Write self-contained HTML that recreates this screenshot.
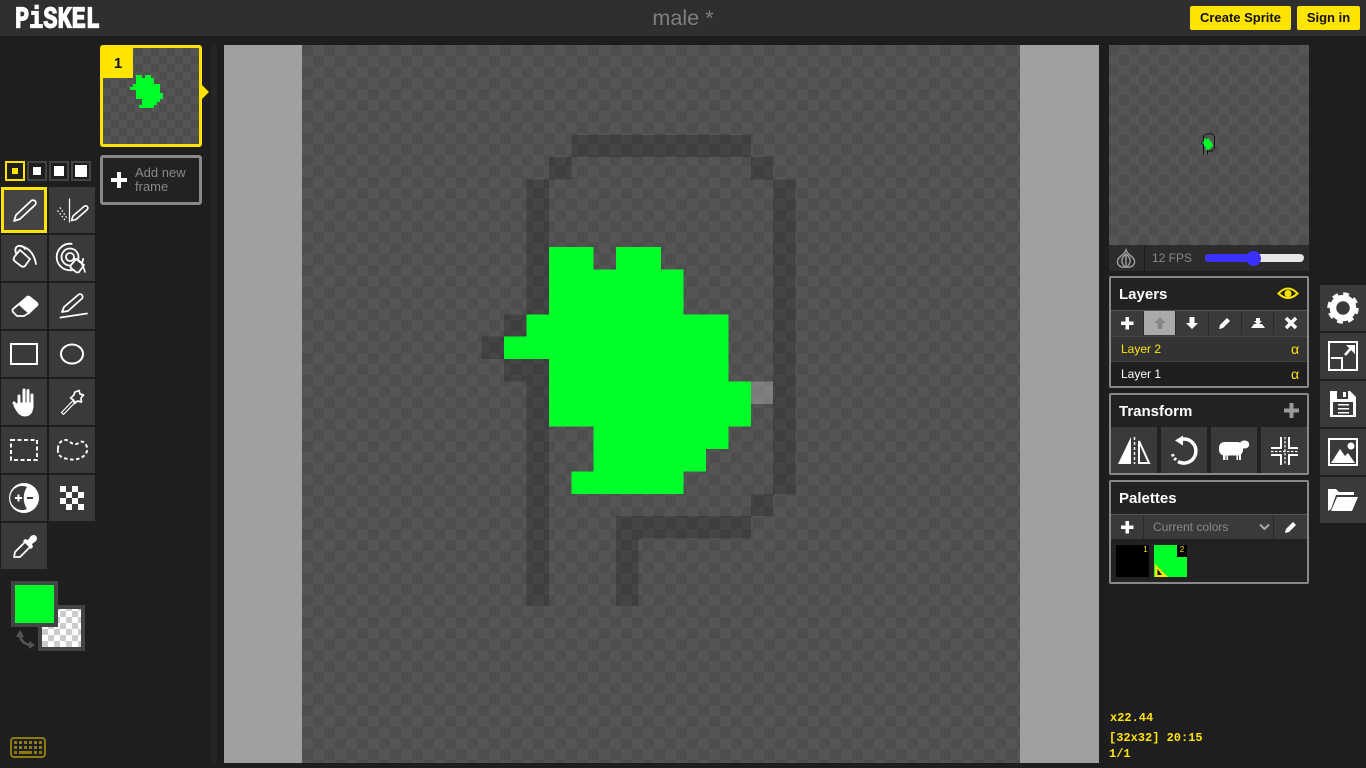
<!DOCTYPE html>
<html><head><meta charset="utf-8"><title>Piskel</title>
<style>
*{box-sizing:border-box;margin:0;padding:0}
html,body{width:1366px;height:768px;overflow:hidden;background:#1e1e1e;font-family:"Liberation Sans",sans-serif}
.a{position:absolute}
.btn{position:absolute;background:#3a3a3a;width:46px;height:46px}
.panel{position:absolute;left:1109px;width:200px;border:2px solid #888;border-radius:2px;background:#222}
.ttl{position:absolute;left:1119px;font:bold 15px "Liberation Sans",sans-serif;color:#fff;line-height:18px}
.sep{position:absolute;width:1px;background:#2a2a2a}
.ps{position:absolute;top:161px;width:20px;height:20px;border:2px solid #444;background:#1e1e1e}
.ps i{position:absolute;background:#fff}
.yb{position:absolute;top:6px;height:24px;background:#ffe400;border-radius:2px;color:#111;font:bold 13px/24px "Liberation Sans",sans-serif;text-align:center}
.st{position:absolute;font:bold 12px/14px "Liberation Mono",monospace;color:#ffe400;white-space:nowrap}
.al{position:absolute;left:180px;top:0;font-size:14px;color:#ffe400}
svg{position:absolute;left:0;top:0}
</style></head><body>
<div class="a" style="left:0;top:0;width:1366px;height:36px;background:#2f2f2f"></div>
<div class="a" style="left:15px;top:9px;width:86px;height:24px;overflow:visible"><div style="font:bold 23.6px/24px 'Liberation Mono',monospace;color:#fff;transform:scale(1,1.3);transform-origin:0 50%;-webkit-text-stroke:1px #fff;white-space:nowrap">PiSKEL</div></div>
<div class="a" style="left:483px;width:400px;top:5px;text-align:center;font-size:21.6px;line-height:26px;color:#808080">male *</div>
<div class="yb" style="left:1190px;width:101px">Create Sprite</div>
<div class="yb" style="left:1297px;width:63px">Sign in</div>

<!-- pen sizes -->
<div class="ps" style="left:5px;border-color:#ffe400"><i style="left:5px;top:5px;width:6px;height:6px;background:#ffe400"></i></div>
<div class="ps" style="left:27px"><i style="left:4px;top:4px;width:8px;height:8px"></i></div>
<div class="ps" style="left:49px"><i style="left:3px;top:3px;width:10px;height:10px"></i></div>
<div class="ps" style="left:71px"><i style="left:2px;top:2px;width:12px;height:12px"></i></div>

<!-- tool buttons -->
<div class="btn" style="left:1px;top:187px;background:#444;border:3px solid #ffe400"></div>
<div class="btn" style="left:49px;top:187px"></div>
<div class="btn" style="left:1px;top:235px"></div><div class="btn" style="left:49px;top:235px"></div>
<div class="btn" style="left:1px;top:283px"></div><div class="btn" style="left:49px;top:283px"></div>
<div class="btn" style="left:1px;top:331px"></div><div class="btn" style="left:49px;top:331px"></div>
<div class="btn" style="left:1px;top:379px"></div><div class="btn" style="left:49px;top:379px"></div>
<div class="btn" style="left:1px;top:427px"></div><div class="btn" style="left:49px;top:427px"></div>
<div class="btn" style="left:1px;top:475px"></div><div class="btn" style="left:49px;top:475px"></div>
<div class="btn" style="left:1px;top:523px"></div>

<!-- colours -->
<div class="a" style="left:38px;top:605px;width:47px;height:46px;border:4px solid #444;background-color:#fff;background-image:conic-gradient(#ccc 25%,#fff 0 50%,#ccc 0 75%,#fff 0);background-size:12px 12px;background-position:0 2px"></div>
<div class="a" style="left:11px;top:581px;width:47px;height:46px;border:4px solid #444;background:#00ff2a"></div>

<!-- frames -->
<div class="a" style="left:100px;top:45px;width:102px;height:102px;border:3px solid #ffe400;border-radius:3px;background-color:#4e4e4e;background-image:conic-gradient(#555 25%,#4e4e4e 0 50%,#555 0 75%,#4e4e4e 0);background-size:16px 16px"></div>
<div class="a" style="left:103px;top:48px;width:30px;height:30px;background:#ffe400;color:#111;font:bold 15px/32px 'Liberation Sans',sans-serif;text-align:center">1</div>
<div class="a" style="left:100px;top:155px;width:102px;height:50px;border:3px solid #888;border-radius:3px;background:#222"></div>
<div class="a" style="left:135px;top:166px;width:64px;font-size:13px;line-height:14px;color:#888">Add new frame</div>
<div class="a" style="left:211px;top:45px;width:6px;height:718px;background:#262626"></div>

<!-- canvas -->
<div class="a" style="left:224px;top:45px;width:875px;height:718px;background:#a0a0a0"></div>
<div class="a" style="left:302px;top:45px;width:718px;height:718px;background-color:#4e4e4e;background-image:conic-gradient(#555 25%,#4e4e4e 0 50%,#555 0 75%,#4e4e4e 0);background-size:22px 22px"></div>

<!-- preview -->
<div class="a" style="left:1109px;top:45px;width:200px;height:200px;background-color:#4e4e4e;background-image:conic-gradient(#555 25%,#4e4e4e 0 50%,#555 0 75%,#4e4e4e 0);background-size:20px 20px"></div>
<div class="a" style="left:1109px;top:245px;width:200px;height:26px;background:#2c2c2c"></div>
<div class="a" style="left:1144px;top:245px;width:1px;height:26px;background:#1e1e1e"></div>
<div class="a" style="left:1152px;top:251px;font-size:12px;line-height:14px;color:#888">12 FPS</div>
<div class="a" style="left:1205px;top:254px;width:99px;height:8px;border-radius:4px;background:#e6e6e6"></div>
<div class="a" style="left:1205px;top:254px;width:48px;height:8px;border-radius:4px 0 0 4px;background:#3a30ff"></div>
<div class="a" style="left:1246px;top:250.5px;width:15px;height:15px;border-radius:50%;background:#3a30ff"></div>

<!-- layers -->
<div class="panel" style="top:276px;height:112px"></div>
<div class="ttl" style="top:286px">Layers</div>
<div class="a" style="left:1111px;top:310px;width:196px;height:26px;background:#3a3a3a;border-top:1px solid #555"></div>
<div class="a" style="left:1144px;top:311px;width:31px;height:24px;background:#aaa"></div>
<div class="sep" style="left:1143px;top:311px;height:24px"></div><div class="sep" style="left:1175px;top:311px;height:24px"></div><div class="sep" style="left:1208px;top:311px;height:24px"></div><div class="sep" style="left:1241px;top:311px;height:24px"></div><div class="sep" style="left:1273px;top:311px;height:24px"></div>
<div class="a" style="left:1111px;top:336px;width:196px;height:25px;background:#333;border-top:1px solid #444;font-size:12px;line-height:25px;color:#ffe400;padding-left:10px">Layer 2<span class="al">α</span></div>
<div class="a" style="left:1111px;top:361px;width:196px;height:25px;background:#1f1f1f;border-top:1px solid #444;font-size:12px;line-height:25px;color:#fff;padding-left:10px">Layer 1<span class="al">α</span></div>

<!-- transform -->
<div class="panel" style="top:393px;height:82px"></div>
<div class="ttl" style="top:403px">Transform</div>
<div class="btn" style="left:1111px;top:427px"></div><div class="btn" style="left:1161px;top:427px"></div><div class="btn" style="left:1211px;top:427px"></div><div class="btn" style="left:1261px;top:427px"></div>

<!-- palettes -->
<div class="panel" style="top:480px;height:104px"></div>
<div class="ttl" style="top:490px">Palettes</div>
<div class="a" style="left:1111px;top:514px;width:196px;height:25px;background:#3a3a3a;border-top:1px solid #555"></div>
<div class="sep" style="left:1143px;top:515px;height:24px"></div><div class="sep" style="left:1273px;top:515px;height:24px"></div>
<div class="a" style="left:1153px;top:520px;font-size:12px;line-height:14px;color:#888">Current colors</div>
<div class="a" style="left:1116px;top:545px;width:33px;height:32px;background:#000"></div>
<div class="a" style="left:1142px;top:545px;width:7px;font:8px/10px 'Liberation Sans',sans-serif;color:#ffe400;text-align:center">1</div>
<div class="a" style="left:1154px;top:545px;width:33px;height:32px;background:#00ff2a"></div>
<div class="a" style="left:1177px;top:545px;width:10px;height:12px;background:#000;font:8px/10px 'Liberation Sans',sans-serif;color:#ffe400;text-align:center">2</div>

<!-- settings -->
<div class="btn" style="left:1320px;top:285px"></div><div class="btn" style="left:1320px;top:333px"></div><div class="btn" style="left:1320px;top:381px"></div><div class="btn" style="left:1320px;top:429px"></div><div class="btn" style="left:1320px;top:477px"></div>

<!-- status -->
<div class="st" style="left:1110px;top:711px">x22.44</div>
<div class="st" style="left:1109px;top:731px">[32x32] 20:15</div>
<div class="st" style="left:1109px;top:747px">1/1</div>

<svg width="1366" height="768" viewBox="0 0 1366 768" fill="none">
<!-- main sprite -->
<g transform="translate(302 45) scale(22.4375)" shape-rendering="crispEdges">
<path fill="#000" fill-opacity=".18" d="M12 4h8v1h-8zM11 5h1v1h-1zM20 5h1v1h-1zM10 6h1v19h-1zM21 6h1v14h-1zM20 20h1v1h-1zM14 21h6v1h-6zM14 22h1v3h-1zM9 12h1v1h-1zM8 13h1v1h-1zM9 14h1v1h-1z"/>
<path fill="#00ff2a" d="M11 9h2v1h-2zM14 9h2v1h-2zM11 10h6v2h-6zM10 12h9v1h-9zM9 13h10v1h-10zM11 14h8v1h-8zM11 15h9v2h-9zM13 17h6v1h-6zM13 18h5v1h-5zM12 19h5v1h-5z"/>
<path fill="#fff" fill-opacity=".25" d="M20 15h1v1h-1z"/>
</g>
<!-- thumbnail sprite -->
<g transform="translate(103 48) scale(3)" shape-rendering="crispEdges">
<path fill="#00ff2a" d="M11 9h2v1h-2zM14 9h2v1h-2zM11 10h6v2h-6zM10 12h9v1h-9zM9 13h10v1h-10zM11 14h8v1h-8zM11 15h9v2h-9zM13 17h6v1h-6zM13 18h5v1h-5zM12 19h5v1h-5z"/>
</g>
<path fill="#ffe400" d="M202 85l7 7-7 7z"/>
<path fill="#fff" d="M111 178h6v-6h4v6h6v4h-6v6h-4v-6h-6z"/>
<!-- preview sprite -->
<g transform="translate(1193 129.500)" shape-rendering="crispEdges">
<path fill="#111" d="M12 4h8v1h-8zM11 5h1v1h-1zM20 5h1v1h-1zM10 6h1v19h-1zM21 6h1v14h-1zM20 20h1v1h-1zM14 21h6v1h-6zM14 22h1v3h-1zM9 12h1v1h-1zM8 13h1v1h-1zM9 14h1v1h-1z"/>
<path fill="#00ff2a" d="M11 9h2v1h-2zM14 9h2v1h-2zM11 10h6v2h-6zM10 12h9v1h-9zM9 13h10v1h-10zM11 14h8v1h-8zM11 15h9v2h-9zM13 17h6v1h-6zM13 18h5v1h-5zM12 19h5v1h-5z"/>
</g>

<g stroke="#fff" stroke-width="1.800" stroke-linejoin="round" stroke-linecap="round">
<!-- pen -->
<path d="M14 221l2-6 15-14a2.800 2.800 0 0 1 4 4l-15 14z"/>
<!-- mirror -->
<path d="M69.500 199v23" stroke-width="1.200"/>
<path d="M71.500 220.500l1.500-4.500L84 206.500a2.200 2.200 0 0 1 3.300 3L76 219.500z" stroke-width="1.600"/>
<path d="M57.500 210.500l7.500 9.500M60 207.500l7.500 11.500" stroke-dasharray="1.500 2" stroke-width="1.300" stroke-linecap="butt"/>
<!-- bucket -->
<path d="M14 258q0-1 1-2l5-6 10 9-5 7q-2 1.500-4 0l-6.500-5q-1.500-1.500-.5-3z"/>
<path d="M16 253q-2-5 2-7q5-1 7 3"/>
<path stroke-width="1.800" d="M20 246q13 2 16 18"/>
<!-- paint-same -->
<circle cx="70" cy="257" r="13.300" stroke-dasharray="62 22" stroke-dashoffset="-2"/>
<circle cx="70" cy="257" r="8.500"/>
<circle cx="70" cy="257" r="4"/>
<path d="M71 265l5-6 8 6-5 7q-1 1-3 0l-5-4q-1-1 0-3z" fill="#3a3a3a"/>
<path stroke-width="1.600" d="M74 259q7-1 11 13"/>
<!-- eraser -->
<path fill="#fff" d="M19 304L27 297q1-1 2.500 0L37 303q1 1.500 0 2.500L29 313z"/>
<path d="M19 304L13 309q-1 1.500 0 3L17 316h7L29 313"/>
<!-- stroke -->
<path d="M62 312l2-5 14-12a2.500 2.500 0 0 1 4 3.500L68 311z"/>
<path d="M60.500 317.500l26.500-4" stroke-width="1.800"/>
<!-- rect, ellipse -->
<rect x="11" y="344" width="26" height="20" stroke-width="2" stroke-linejoin="miter"/>
<ellipse cx="72" cy="354" rx="11" ry="9.500" stroke-width="2"/>
<!-- hand -->
<g stroke-width="3">
<path d="M19 396v10M24 390v14M28 390.500v14M32 395v12M14 403l5 6"/>
</g>
<path fill="#fff" stroke-width="1" d="M18 403h15v4q-1 9-8 9-5 0-8-5l-3-5z"/>
<!-- wand -->
<path d="M61.500 412.500l12-12.500 2 2-12 12.500z" stroke-width="1.200"/>
<path d="M79 390.500l1 3.500 3.500 1-2.500 3 .5 4-4-1-3 2.500-1-3.500-3-2 3-2.500 1.500-3.500z" stroke-width="1.700"/>
<!-- select -->
<rect x="11" y="440" width="26" height="20" stroke-width="2" stroke-dasharray="4 2.500" stroke-linecap="butt" stroke-linejoin="miter"/>
<path d="M58 449C58 440 66 438 70 442C74 445 76 445 80 442C85 440 88 447 87 451C85 458 76 461 68 459C61 458 57 455 58 449z" stroke-width="2" stroke-dasharray="3.500 2.500" stroke-linecap="butt"/>
</g>
<!-- lighten -->
<circle cx="24" cy="498" r="15" fill="#fff"/>
<path fill="#3a3a3a" d="M27 487A12 12 0 1 0 27 509A20 20 0 0 1 27 487z"/>
<path d="M15 497h2.500v-2.500h2v2.500H22v2h-2.500v2.500h-2V499H15z" fill="#fff"/>
<rect x="27" y="497" width="6" height="2" fill="#3a3a3a"/>
<!-- dither -->
<path shape-rendering="crispEdges" fill="#fff" d="M60 486h6v6h-6zM72 486h6v6h-6zM66 492h6v6h-6zM78 492h6v6h-6zM60 498h6v6h-6zM72 498h6v6h-6zM66 504h6v6h-6zM78 504h6v6h-6z"/>
<!-- eyedropper -->
<path stroke="#fff" stroke-width="1.800" stroke-linejoin="round" d="M14 557l1-5 11-11 5 5-11 11z"/>
<path fill="#fff" d="M25 539l3 1 3-4q3-2 5 0t0 5l-4 3 1 3-2 2-8-8z"/>
<!-- swap -->
<path stroke="#555" stroke-width="2.500" d="M20 633q0 11 11 12"/>
<path fill="#555" d="M16 637l4-7 4 7zM29 641l6 4-6 4z"/>
<!-- keyboard -->
<rect x="11" y="738" width="34" height="19" rx="3" stroke="#8a7a10" stroke-width="2"/>
<path fill="#8a7a10" d="M14 741h3v3h-3zM19 741h3v3h-3zM24 741h3v3h-3zM29 741h3v3h-3zM34 741h3v3h-3zM39 741h3v3h-3zM14 746h3v3h-3zM19 746h3v3h-3zM24 746h3v3h-3zM29 746h3v3h-3zM34 746h3v3h-3zM39 746h3v3h-3zM14 751h3v3h-3zM19 751h13v3H19zM34 751h3v3h-3zM39 751h3v3h-3z"/>
<!-- onion -->
<g stroke="#999" stroke-width="1.500"><path d="M1126 250q1 3 5 6 5 4 3 8t-8 3q-6 1-8-3t3-8q4-3 5-6z"/><path d="M1126 254q-5 4-4 8t4 5q3-1 4-5t-4-8zM1126 254v13"/></g>
<!-- eye -->
<path stroke="#ffe400" stroke-width="2" d="M1278.500 293.500q9.500-10 19 0q-9.500 9-19 0z"/>
<circle cx="1288" cy="293.500" r="3.500" fill="#ffe400"/>
<!-- layer toolbar -->
<path fill="#fff" d="M1121 321.500h4.500V317h3.500v4.500h4.500v3.500H1129v4.500h-3.500V325H1121z"/>
<path fill="#888" d="M1160 317l6 6h-3.500v6h-5v-6h-3.500z"/>
<path fill="#fff" d="M1192 329l6-6h-3.500v-6h-5v6h-3.500z"/>
<path fill="#fff" d="M1219 329l1-4 7-7 3 3-7 7z"/>
<path fill="#fff" d="M1251 328l3-4h8l3 4zM1256 318h4v3h2l-4 4-4-4h2z"/>
<path stroke="#fff" stroke-width="3.500" d="M1286 318l10 10M1296 318l-10 10"/>
<!-- transform plus -->
<path fill="#999" d="M1284 408.500h5.500V403h4v5.500h5.500v4h-5.500v5.500h-4v-5.500H1284z"/>
<!-- flip -->
<path fill="#fff" d="M1118 464l13-27v27z"/>
<path stroke="#fff" stroke-width="2" d="M1139 441v22h10z"/>
<path stroke="#fff" stroke-width="1.500" stroke-dasharray="3 2" d="M1134.500 437v27"/>
<!-- rotate -->
<path stroke="#fff" stroke-width="3.500" d="M1182 439.200A12 12 0 1 1 1178 461.500"/>
<path stroke="#fff" stroke-width="3" stroke-dasharray="2.500 2" d="M1176 460l-2.500-3-1.500-4"/>
<path fill="#fff" d="M1175 440.500L1183 435.500v10z"/>
<!-- sheep -->
<rect x="1219" y="442" width="24" height="13.500" rx="5.500" fill="#fff"/>
<ellipse cx="1244.500" cy="444.500" rx="4.800" ry="4" fill="#fff"/>
<path fill="#fff" d="M1223 452h2.500v8H1223zM1226.500 452h1.500v8h-1.500zM1236.500 452h1.500v8h-1.500zM1239 452h2v8h-2z"/>
<!-- align -->
<path stroke="#fff" stroke-width="2" d="M1281 437v11h-10M1289 437v11h9M1271 455h10v10M1298 455h-9v10"/>
<path stroke="#fff" stroke-width="1.200" stroke-dasharray="2.500 1.500" d="M1285 437v28M1271 451.500h27"/>
<!-- palette toolbar -->
<path fill="#fff" d="M1121 525.500h4.500V521h3.500v4.500h4.500v3.500H1129v4.500h-3.500V529H1121z"/>
<path stroke="#aaa" stroke-width="2" d="M1260 524.500l4.500 4.500 4.500-4.500"/>
<path fill="#fff" d="M1285 533l1-4 7-7 3 3-7 7z"/>
<!-- selected swatch -->
<path fill="#ffe400" d="M1155 564l13 13h-13z"/>
<path fill="#111" d="M1157.500 569l4.500 6h-4.500z"/>
<!-- settings gear -->
<circle cx="1343" cy="308" r="10" stroke="#fff" stroke-width="6.500"/>
<circle cx="1343" cy="308" r="13.500" stroke="#fff" stroke-width="4.500" stroke-dasharray="5.600 5"/>
<!-- resize -->
<rect x="1329" y="342" width="28" height="28" stroke="#fff" stroke-width="2"/>
<path stroke="#fff" stroke-width="2" d="M1331 358h11v12"/>
<path stroke="#fff" stroke-width="2.500" d="M1345 355l8-9"/>
<path fill="#fff" d="M1346 345h9v9z"/>
<!-- save -->
<path fill="#fff" d="M1330 391h20l6 6v20h-26z"/>
<path fill="#3a3a3a" d="M1337 391h11v8h-11zM1333 402h20v13h-20z"/>
<path fill="#fff" d="M1343 392h3v5h-3zM1338 404h11v1.500h-11zM1338 408h11v1.500h-11zM1338 412h11v1.500h-11z"/>
<!-- image -->
<rect x="1329" y="439" width="28" height="26" stroke="#fff" stroke-width="2"/>
<circle cx="1351" cy="446" r="3.500" fill="#fff"/>
<path fill="#fff" d="M1331 463l9-14 5 7 3-3 7 10z"/>
<!-- folder -->
<path fill="#fff" d="M1328 489h8l3 3h15v3h-18l-5 14-3 2z"/>
<path fill="#fff" d="M1337 497h21l-6 14h-21z"/>
</svg>
</body></html>
